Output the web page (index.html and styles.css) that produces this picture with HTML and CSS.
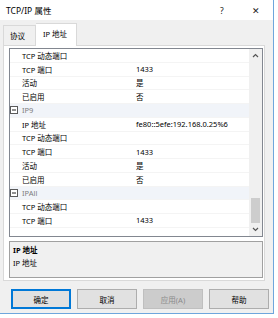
FILE: index.html
```html
<!DOCTYPE html>
<html>
<head>
<meta charset="utf-8">
<link rel="stylesheet" href="styles.css">
</head>
<body>
<div class="window">
  <div class="titlebar">
    <span class="title">TCP/IP 属性</span>
    <span class="help">?</span>
    <span class="close">✕</span>
  </div>
  <div class="tabs">
    <div class="tab">协议</div>
    <div class="tab active">IP 地址</div>
  </div>
  <div class="panel">
    <div class="grid">
      <div class="rows">
        <div class="row"><span class="gut"></span><span class="name">TCP 动态端口</span><span class="val"></span></div>
        <div class="row"><span class="gut"></span><span class="name">TCP 端口</span><span class="val">1433</span></div>
        <div class="row"><span class="gut"></span><span class="name">活动</span><span class="val">是</span></div>
        <div class="row"><span class="gut"></span><span class="name">已启用</span><span class="val">否</span></div>
        <div class="row cat"><span class="gut"><svg width="8" height="8" viewBox="0 0 8 8"><rect x="0.5" y="0.5" width="7" height="7" fill="#fff" stroke="#5a5a5a"/><line x1="2" y1="4" x2="6" y2="4" stroke="#222"/></svg></span><span class="name">IP9</span><span class="val"></span></div>
        <div class="row"><span class="gut"></span><span class="name">IP 地址</span><span class="val">fe80::5efe:192.168.0.25%6</span></div>
        <div class="row"><span class="gut"></span><span class="name">TCP 动态端口</span><span class="val"></span></div>
        <div class="row"><span class="gut"></span><span class="name">TCP 端口</span><span class="val">1433</span></div>
        <div class="row"><span class="gut"></span><span class="name">活动</span><span class="val">是</span></div>
        <div class="row"><span class="gut"></span><span class="name">已启用</span><span class="val">否</span></div>
        <div class="row cat"><span class="gut"><svg width="8" height="8" viewBox="0 0 8 8"><rect x="0.5" y="0.5" width="7" height="7" fill="#fff" stroke="#5a5a5a"/><line x1="2" y1="4" x2="6" y2="4" stroke="#222"/></svg></span><span class="name">IPAll</span><span class="val"></span></div>
        <div class="row"><span class="gut"></span><span class="name">TCP 动态端口</span><span class="val"></span></div>
        <div class="row"><span class="gut"></span><span class="name">TCP 端口</span><span class="val">1433</span></div>
      </div>
      <div class="scrollbar">
        <svg class="arrow" width="7" height="5" viewBox="0 0 7 5"><polyline points="1,4 3.5,1.5 6,4" fill="none" stroke="#555" stroke-width="1.2"/></svg>
        <div class="track"><div class="thumb"></div></div>
        <svg class="arrow" width="7" height="5" viewBox="0 0 7 5"><polyline points="1,1 3.5,3.5 6,1" fill="none" stroke="#555" stroke-width="1.2"/></svg>
      </div>
    </div>
    <div class="desc">
      <div class="desc-title">IP 地址</div>
      <div class="desc-text">IP 地址</div>
    </div>
  </div>
  <div class="buttons">
    <div class="btn default">确定</div>
    <div class="btn">取消</div>
    <div class="btn disabled">应用(A)</div>
    <div class="btn">帮助</div>
  </div>
</div>
</body>
</html>
```

FILE: styles.css
```css
* { box-sizing: border-box; }
html, body { margin: 0; padding: 0; }
body {
  width: 278px;
  height: 318px;
  background: #ffffff;
  font-family: "Noto Sans", "Noto Sans CJK SC", sans-serif;
  color: #000;
  overflow: hidden;
}
.window {
  width: 274px;
  height: 314px;
  background: #f0f0f0;
  border-right: 1px solid #6ea6dc;
  border-bottom: 1px solid #6ea6dc;
  display: flex;
  flex-direction: column;
}
.titlebar {
  height: 20px;
  background: #ffffff;
  display: flex;
  align-items: center;
  padding-left: 6px;
  font-size: 8.5px;
}
.title { flex: 1; }
.help { width: 10px; margin-right: 22px; font-size: 8.5px; color: #222; }
.close { width: 12px; margin-right: 9px; font-size: 9px; color: #222; }
.tabs {
  height: 25px;
  display: flex;
  align-items: flex-end;
  padding-left: 3px;
  font-size: 7.5px;
}
.tab {
  height: 20px;
  width: 33px;
  border: 1px solid #d9d9d9;
  border-bottom: none;
  background: #f0f0f0;
  display: flex;
  align-items: center;
  padding-left: 6px;
}
.tab.active {
  height: 23px;
  width: 41px;
  background: #ffffff;
  border-left: none;
  margin-bottom: -1px;
  position: relative;
  z-index: 1;
  padding-left: 7px;
  padding-bottom: 3px;
}
.panel {
  width: 262px;
  height: 236px;
  margin-left: 3px;
  background: #ffffff;
  border: 1px solid #d9d9d9;
  padding: 2px 1px 0 5px;
  display: flex;
  flex-direction: column;
  gap: 4px;
}
.grid {
  height: 189px;
  border: 1px solid #828790;
  display: flex;
  background: #ffffff;
  overflow: hidden;
}
.rows { flex: 1; overflow: hidden; }
.row {
  height: 13.75px;
  display: grid;
  grid-template-columns: 12px 112px 1fr;
  align-items: center;
  font-size: 7.5px;
  border-bottom: 1px solid #f4f4f4;
  white-space: nowrap;
}
.row .gut {
  height: 100%;
  display: flex;
  align-items: center;
}
.row .val {
  height: 100%;
  display: flex;
  align-items: center;
  padding-left: 2px;
}
.row.cat { background: #f1f4f9; }
.row.cat .name { color: #7d7d7d; }
.scrollbar {
  width: 13px;
  background: #f0f0f0;
  display: flex;
  flex-direction: column;
  align-items: center;
}
.arrow { margin: 4px 0; flex: none; }
.track { flex: 1; width: 100%; position: relative; }
.thumb {
  position: absolute;
  left: 2px;
  right: 2px;
  top: 136px;
  height: 25px;
  background: #cdcdcd;
}
.desc {
  height: 37px;
  background: #f0f0f0;
  border: 1px solid #a0a0a0;
  padding: 2px 0 0 3px;
  font-size: 7.5px;
  line-height: 13px;
}
.desc-title { font-weight: bold; }
.buttons {
  display: flex;
  gap: 6px;
  padding-left: 11px;
  margin-top: 8px;
}
.btn {
  width: 60px;
  height: 20px;
  background: #e1e1e1;
  border: 1px solid #adadad;
  display: flex;
  align-items: center;
  justify-content: center;
  font-size: 7.5px;
}
.btn.default { border: 2px solid #0078d7; }
.btn.disabled { background: #cccccc; border-color: #bfbfbf; color: #8a8a8a; }
```
